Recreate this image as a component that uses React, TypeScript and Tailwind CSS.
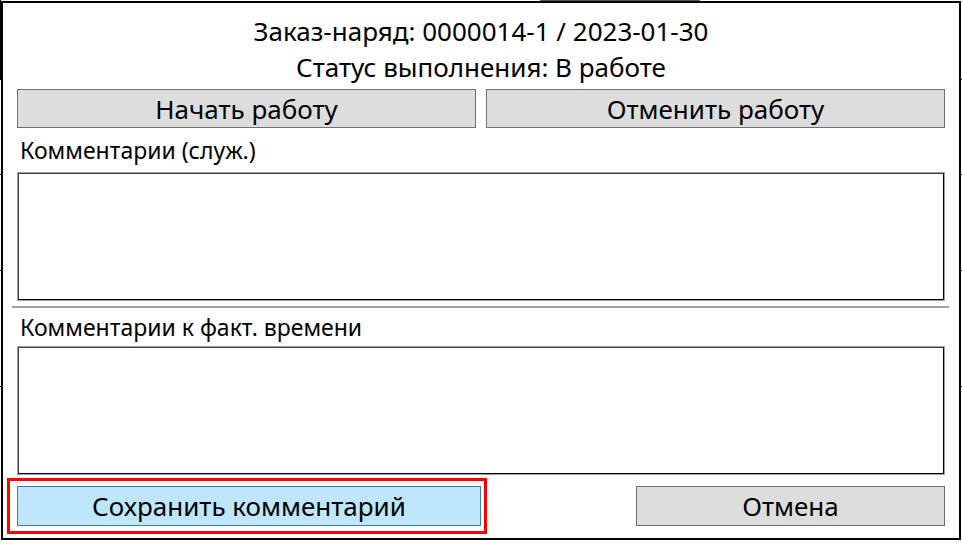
export default function App() {
	return (
		<div className="relative w-[962px] h-[545px] bg-white overflow-hidden" style={{ fontFamily: '"Noto Sans", "Open Sans", sans-serif' }}>
			{/* window edges behind the dialog */}
			<div className="absolute left-0 top-0 w-px h-[80px] bg-black" />
			<div className="absolute left-0 top-[79px] w-[3px] h-px bg-black" />
			<div className="absolute left-0 top-[174px] w-[3px] h-px bg-black" />
			<div className="absolute left-0 top-[270px] w-[3px] h-px bg-black" />
			<div className="absolute left-0 top-[386px] w-[3px] h-px bg-black" />
			<div className="absolute right-0 top-[79px] w-[2px] h-px bg-black" />
			<div className="absolute right-0 top-[174px] w-[2px] h-px bg-black" />
			<div className="absolute right-0 top-[270px] w-[2px] h-px bg-black" />
			<div className="absolute right-0 top-[386px] w-[2px] h-px bg-black" />
			<div className="absolute left-[540px] top-0 w-[160px] h-px bg-[#555]" />

			{/* dialog */}
			<div className="absolute left-px top-px w-[960px] h-[539px] bg-white border-2 border-black flex flex-col px-[14px] text-black">
				<div className="flex flex-col items-center pt-[10px] text-[26px] leading-[36px]">
					<div>Заказ-наряд: 0000014-1 / 2023-01-30</div>
					<div>Статус выполнения: В работе</div>
				</div>
				<div className="grid grid-cols-2 gap-[10px] mt-[4px]">
					<button className="h-[39px] bg-[#dddddd] border border-[#707070] text-[26px] leading-none">Начать работу</button>
					<button className="h-[39px] bg-[#dddddd] border border-[#707070] text-[26px] leading-none">Отменить работу</button>
				</div>
				<div className="h-[44px] flex items-center pl-[3px] text-[23px]">Комментарии (служ.)</div>
				<div className="h-[129px] border border-[#a0a0a0]">
					<div className="h-full border border-black border-t-[#404040] border-l-[#404040]" />
				</div>
				<div className="h-[2px] bg-[#a0a0a0] -ml-[5px] -mr-[4px] mt-[5px]" />
				<div className="h-[38px] flex items-center pl-[3px] text-[23px]">Комментарии к факт. времени</div>
				<div className="h-[129px] border border-[#a0a0a0]">
					<div className="h-full border border-black border-t-[#404040] border-l-[#404040]" />
				</div>
				<div className="flex items-start justify-between mt-[3px]">
					<div className="-ml-[10px] border-[3px] border-[#ff0000] pl-[7px] pr-[3px] py-[5px]">
						<button className="w-[464px] h-[40px] bg-[#bee6fd] border border-[#3c7fb1] text-[26px] leading-none">Сохранить комментарий</button>
					</div>
					<button className="mt-[8px] w-[309px] h-[40px] bg-[#dddddd] border border-[#707070] text-[26px] leading-none">Отмена</button>
				</div>
			</div>
		</div>
	);
}
